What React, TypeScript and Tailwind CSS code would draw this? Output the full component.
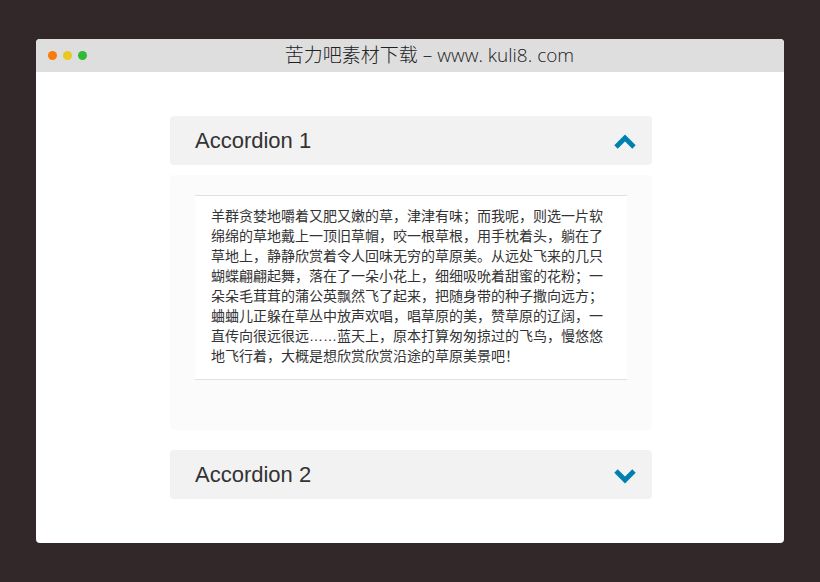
import { useState } from 'react';

interface AccordionItemProps {
	id: string;
	title: string;
	text: string;
	isOpen: boolean;
	onToggle: (id: string) => void;
}

const PASSAGE =
	'羊群贪婪地嚼着又肥又嫩的草，津津有味；而我呢，则选一片软绵绵的草地戴上一顶旧草帽，咬一根草根，用手枕着头，躺在了草地上，静静欣赏着令人回味无穷的草原美。从远处飞来的几只蝴蝶翩翩起舞，落在了一朵小花上，细细吸吮着甜蜜的花粉；一朵朵毛茸茸的蒲公英飘然飞了起来，把随身带的种子撒向远方；蛐蛐儿正躲在草丛中放声欢唱，唱草原的美，赞草原的辽阔，一直传向很远很远……蓝天上，原本打算匆匆掠过的飞鸟，慢悠悠地飞行着，大概是想欣赏欣赏沿途的草原美景吧！';

const ITEMS = [
	{ id: 'accordion-1', title: 'Accordion 1', text: PASSAGE },
	{ id: 'accordion-2', title: 'Accordion 2', text: PASSAGE }
];

const Chevron = ({ up }: { up: boolean }) => (
	<svg width="22" height="19" viewBox="0 0 22 19" fill="none" aria-hidden="true">
		<path d={up ? 'M2 16 11 7 20 16' : 'M2 6 11 15 20 6'} stroke="#0080ae" strokeWidth="4.8" />
	</svg>
);

const TitleBar = () => (
	<header className="flex h-[33px] items-center bg-[#dedede] px-3 pb-0.5">
		<div className="flex gap-1.5 pt-0.5">
			<span className="size-[9px] rounded-full bg-[#fa7b05]" />
			<span className="size-[9px] rounded-full bg-[#e9c81f]" />
			<span className="size-[9px] rounded-full bg-[#2fbc35]" />
		</div>
		<h1 className="flex-1 text-center font-['Open_Sans','Noto_Sans_CJK_SC',sans-serif] text-[19px] leading-6 font-light text-[#222]">
			苦力吧素材下载 – www. kuli8. com
		</h1>
	</header>
);

const AccordionItem = ({ id, title, text, isOpen, onToggle }: AccordionItemProps) => (
	<section>
		<h2>
			<button
				type="button"
				aria-expanded={isOpen}
				aria-controls={`${id}-panel`}
				onClick={() => onToggle(id)}
				className="flex h-[49px] w-full cursor-pointer items-center justify-between rounded bg-[#f2f2f2] pr-4 pl-[25px] text-left text-[22px] leading-8 text-[#333]"
			>
				{title}
				<Chevron up={isOpen} />
			</button>
		</h2>
		{isOpen && (
			<div id={`${id}-panel`} className="mt-2.5 rounded bg-[#fbfbfb] px-[25px] pt-5 pb-[50px]">
				<p className="border-y border-[#e0e0e0] bg-white px-4 pt-2.5 pb-[13px] font-['Liberation_Sans','Noto_Sans_CJK_SC',sans-serif] text-sm leading-5 text-[#333]">
					{text}
				</p>
			</div>
		)}
	</section>
);

export default function App() {
	const [openId, setOpenId] = useState('accordion-1');

	const handleToggle = (id: string) => {
		setOpenId(openId === id ? '' : id);
	};

	return (
		<div lang="zh-CN" className="flex min-h-screen flex-col bg-[#322829] px-9 py-[39px] font-['Liberation_Sans',sans-serif]">
			<div className="flex-1 overflow-hidden rounded bg-white">
				<TitleBar />
				<main className="flex justify-center py-11 pr-4 pl-[18px]">
					<div className="flex w-full max-w-[482px] flex-col gap-5">
						{ITEMS.map((item) => (
							<AccordionItem key={item.id} {...item} isOpen={openId === item.id} onToggle={handleToggle} />
						))}
					</div>
				</main>
			</div>
		</div>
	);
}
